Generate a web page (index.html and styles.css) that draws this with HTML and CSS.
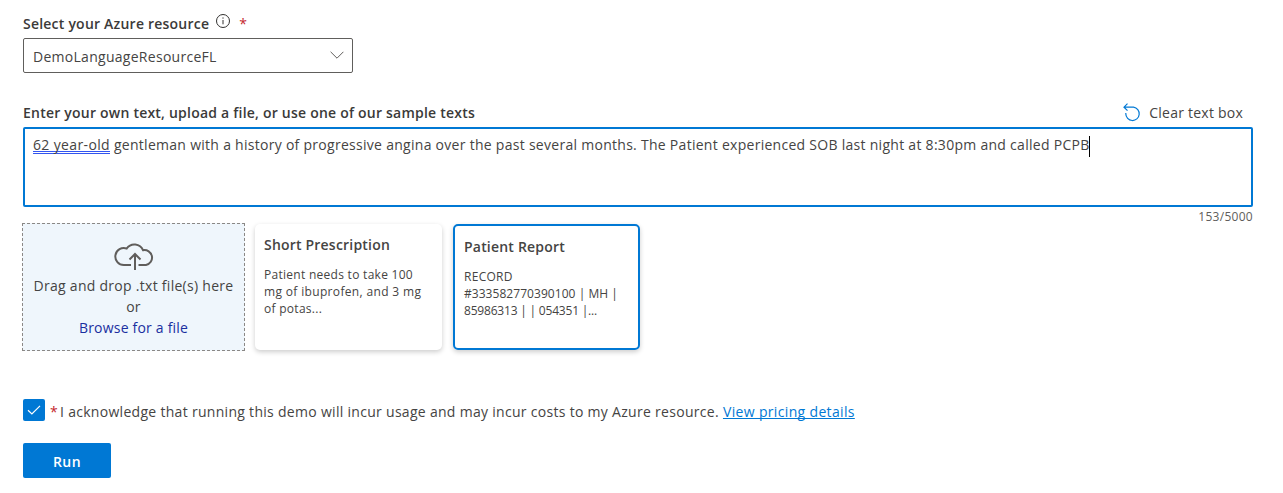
FILE: index.html
```html
<!DOCTYPE html>
<html lang="en">
<head>
<meta charset="utf-8">
<title>Language Studio</title>
<link rel="stylesheet" href="styles.css">
</head>
<body>
<main class="page">
  <div class="label-row">
    <span class="label t-resource">Select your Azure resource</span>
    <svg class="info" width="14" height="14" viewBox="0 0 14 14" fill="none" stroke="#323130"><circle cx="7" cy="7" r="6.5"/><path d="M7 6v4.300M7 3.400v1.300"/></svg>
    <span class="required">*</span>
  </div>
  <div class="dropdown">
    <span class="t-drop">DemoLanguageResourceFL</span>
    <svg width="14" height="8" viewBox="0 0 14 8" fill="none" stroke="#605e5c"><path d="M.6.8 7 7.2 13.4.8"/></svg>
  </div>
  <div class="input-head">
    <span class="label t-enter">Enter your own text, upload a file, or use one of our sample texts</span>
    <span class="clear"><svg width="18" height="19" viewBox="0 0 18 19" fill="none" stroke="#0078d4" stroke-width="1.2"><path d="M4.500.7 1 4.200l3.500 3.500M1 4.200h9.500a6.700 6.700 0 1 1-7.700 6.600v-.8"/></svg><span class="t-clear">Clear text box</span></span>
  </div>
  <div class="textbox"><p class="t-text"><span class="marked">62 year-old</span> gentleman with a history of progressive angina over the past several months. The Patient experienced SOB last night at 8:30pm and called PCPB<i class="caret"></i></p></div>
  <div class="count"><span class="t-count">153/5000</span></div>
  <div class="cards">
    <div class="drop">
      <svg width="40" height="30" viewBox="0 0 40 30" fill="none" stroke="#605e5c" stroke-width="2"><path d="M17 24H10a8.500 8.500 0 1 1 2.700-16.500A9.300 9.300 0 0 1 29 9.200 7.500 7.500 0 0 1 32 24h-7.500M21 29V14M15.500 18.500 21 13l5.500 5.500"/></svg>
      <span class="t-drag">Drag and drop .txt file(s) here</span>
      <span>or</span>
      <span class="browse t-browse">Browse for a file</span>
    </div>
    <div class="card">
      <h3 class="t-short">Short Prescription</h3>
      <p><span class="s1">Patient needs to take 100</span><br><span class="s2">mg of ibuprofen, and 3 mg</span><br><span class="s3">of potas...</span></p>
    </div>
    <div class="card selected">
      <h3 class="t-report">Patient Report</h3>
      <p><span class="r1">RECORD</span><br><span class="r2">#333582770390100 | MH |</span><br><span class="r3">85986313 | | 054351 |...</span></p>
    </div>
  </div>
  <div class="ack">
    <span class="check"><svg width="14" height="10" viewBox="0 0 14 10" fill="none" stroke="#fff" stroke-width="1.2"><path d="M1 5.200 4.900 9 13 .9"/></svg></span>
    <span class="required">*</span>
    <span class="t-ack">I acknowledge that running this demo will incur usage and may incur costs to my Azure resource.</span>
    <a class="pricing t-price">View pricing details</a>
  </div>
  <button class="run">Run</button>
</main>
</body>
</html>
```
FILE: styles.css
```css
* { box-sizing: border-box; }
body { margin: 0; background: #fff; color: #454443; font: 400 14px/20px "Open Sans", "Noto Sans", sans-serif; letter-spacing: .28px; }
.page { padding: 13px 30px 0 23px; height: 493px; display: flex; flex-direction: column; align-items: flex-start; white-space: nowrap; }
.label { font-weight: 600; letter-spacing: .22px; color: #3b3a39; }
.label-row { display: flex; height: 25px; }
.t-resource { padding-top: 1px; }
.info { margin: 1px 0 0 7px; }
.required { color: #c4262c; }
.label-row .required { margin: 1px 0 0 9px; }
.dropdown { width: 330px; height: 35px; border: 1px solid #605e5c; border-radius: 2px; padding: 2px 8px 0 9px; display: flex; justify-content: space-between; align-items: center; }
.dropdown svg { margin-bottom: 3px; }
.input-head { width: 100%; display: flex; justify-content: space-between; margin-top: 30px; height: 24px; padding-right: 10px; }
.clear { display: flex; gap: 8px; letter-spacing: .23px; }
.textbox { width: 100%; height: 80px; border: 2px solid #0078d4; border-radius: 2px; padding: 6px 8px; }
.textbox p { margin: 0; }
.marked { display: inline-block; line-height: 12px; border-bottom: 3px double #3355f0; letter-spacing: .36px; }
.caret { display: inline-block; width: 1px; height: 21px; margin: -4px 0 -4px -1px; background: #000; vertical-align: middle; }
.count { width: 100%; text-align: right; font-size: 12px; line-height: 20px; color: #605e5c; height: 16px; }
.cards { display: flex; margin-left: -1px; height: 128px; }
.drop { width: 223px; background: #eff6fc; border: 1px dashed #8a8886; display: flex; flex-direction: column; align-items: center; line-height: 21px; padding-top: 17px; }
.drop svg { margin-bottom: 4px; }
.browse { color: #1a2fa0; letter-spacing: .2px; }
.card { width: 187px; height: 126px; margin: 1px 0 0 10px; padding: 11px 9px; border-radius: 5px; box-shadow: 0 2px 5px rgba(0,0,0,.2); }
.selected { margin-left: 11px; border: 2px solid #0078d4; }
.card h3 { margin: 0; font: 600 14px/20px "Open Sans", sans-serif; letter-spacing: .2px; }
.card p { margin: 11px 0 0; font-size: 12px; line-height: 17px; }
.s2 { letter-spacing: .34px; }
.r2 { letter-spacing: .05px; }
.r3 { letter-spacing: -.2px; }
.ack { display: flex; align-items: center; margin-top: 48px; height: 22px; }
.check { width: 22px; height: 22px; background: #0078d4; border-radius: 2px; display: flex; align-items: center; justify-content: center; margin-right: 5px; }
.ack .required { width: 10px; padding-top: 3px; }
.t-ack, .t-price { padding-top: 3px; }
.t-ack { letter-spacing: .295px; }
.pricing { color: #0078d4; text-decoration: underline; text-decoration-skip-ink: none; margin-left: 4px; letter-spacing: .34px; }
.run { width: 88px; height: 35px; margin-top: 22px; padding: 2px 0 0; border: 0; border-radius: 2px; background: #0078d4; color: #fff; font: 600 14px/20px "Open Sans", sans-serif; letter-spacing: .4px; }
```
